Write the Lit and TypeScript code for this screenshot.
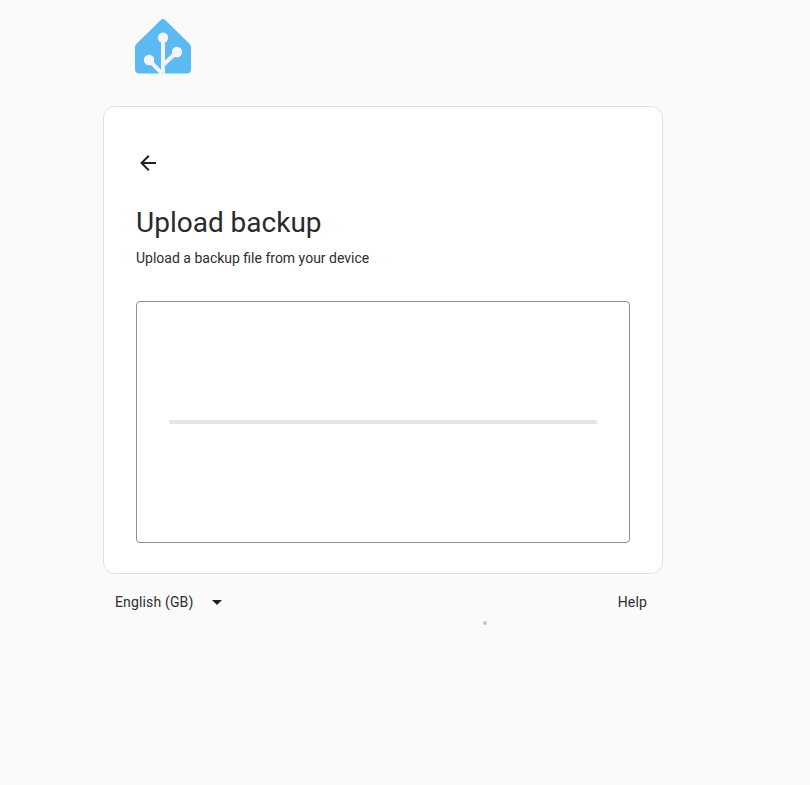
import { LitElement, html, css } from "lit";
import { customElement } from "lit/decorators.js";

@customElement("app-root")
export class AppRoot extends LitElement {
  static styles = css`
    :host {
      display: block;
      position: relative;
      width: 810px;
      height: 785px;
      overflow: hidden;
      background: #fafafa;
      font-family: Roboto, "Liberation Sans", sans-serif;
      color: #212121;
    }
    .page {
      display: flex;
      flex-direction: column;
      width: 560px;
      margin-left: 103px;
    }
    .logo {
      display: block;
      width: 56px;
      height: 56px;
      margin: 18px 0 32px 32px;
    }
    .card {
      box-sizing: border-box;
      height: 468px;
      background: #fff;
      border: 1px solid #e0e0e0;
      border-radius: 12px;
      padding: 32px;
      display: flex;
      flex-direction: column;
    }
    .back {
      display: block;
      flex: none;
      width: 24px;
      height: 24px;
      margin-top: 12px;
      fill: #212121;
    }
    h1 {
      flex: none;
      margin: 30px 0 0;
      font-size: 28px;
      line-height: 36px;
      font-weight: 400;
      color: #2a2a2a;
    }
    p {
      flex: none;
      margin: 7px 0 0;
      font-size: 14px;
      line-height: 20px;
      color: #2e2e2e;
    }
    .box {
      box-sizing: border-box;
      flex: none;
      height: 242px;
      margin-top: 33px;
      border: 1px solid #8e8e8e;
      border-radius: 4px;
      padding: 0 32px;
      display: flex;
      align-items: center;
    }
    .bar {
      flex: 1;
      height: 4px;
      background: #e6e6e6;
    }
    footer {
      display: flex;
      justify-content: space-between;
      align-items: center;
      height: 56px;
      font-size: 14px;
      letter-spacing: 0.15px;
      color: #2e2e2e;
      padding: 0 16px 0 12px;
    }
    .lang {
      display: flex;
      align-items: center;
    }
    .caret {
      width: 24px;
      height: 24px;
      margin-left: 11px;
      fill: #212121;
    }
    .dot {
      position: absolute;
      left: 483px;
      top: 621px;
      width: 4px;
      height: 4px;
      border-radius: 50%;
      background: #9fd0fb;
    }
  `;

  render() {
    return html`
      <div class="page">
        <svg class="logo" viewBox="0 0 56 56">
          <path
            fill="#5cb9f2"
            d="M28 1 Q26.8 1 25.8 2 L1.8 25.6 Q0 27.4 0 30 V51 Q0 55.6 4.6 55.6 H51.4 Q56 55.6 56 51 V30 Q56 27.4 54.2 25.6 L30.2 2 Q29.2 1 28 1 Z"
          />
          <g stroke="#f2f4f9" stroke-width="4" fill="none">
            <path d="M28 20 V55.6" />
            <path d="M14 42 L27 55.6" />
            <path d="M42 34 L28 47" />
          </g>
          <g fill="#f2f4f9">
            <circle cx="28" cy="19.6" r="5.2" />
            <circle cx="14" cy="42" r="5.2" />
            <circle cx="42" cy="34" r="5.2" />
          </g>
        </svg>
        <section class="card">
          <svg class="back" viewBox="0 0 24 24">
            <path d="M20,11V13H8L13.5,18.5L12.08,19.92L4.16,12L12.08,4.08L13.5,5.5L8,11H20Z" />
          </svg>
          <h1>Upload backup</h1>
          <p>Upload a backup file from your device</p>
          <div class="box"><div class="bar"></div></div>
        </section>
        <footer>
          <div class="lang">
            <span>English (GB)</span>
            <svg class="caret" viewBox="0 0 24 24"><path d="M7 10l5 5 5-5z" /></svg>
          </div>
          <span>Help</span>
        </footer>
      </div>
      <div class="dot"></div>
    `;
  }
}
